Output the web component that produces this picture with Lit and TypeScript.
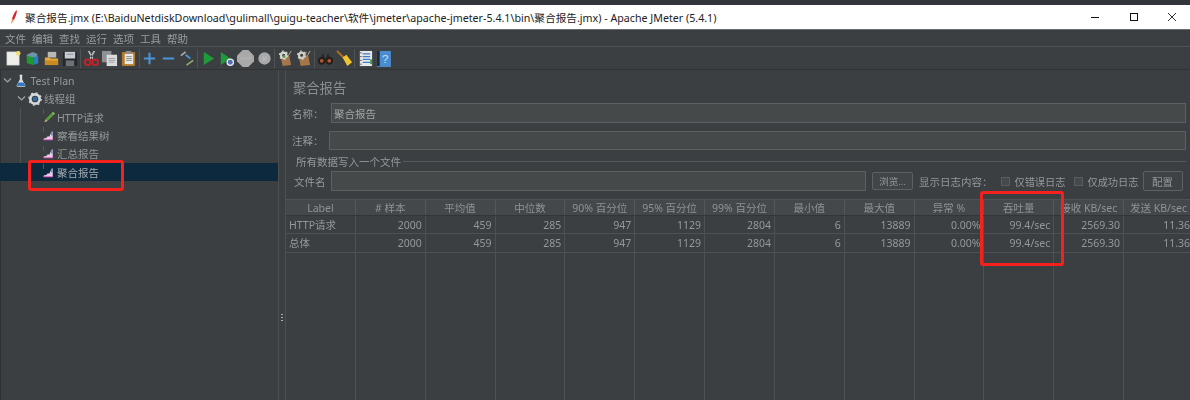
import { LitElement, html, css, svg } from "lit";
import { customElement } from "lit/decorators.js";

const icon = (body: unknown, size = 18) =>
  html`<svg width=${size} height=${size} viewBox="0 0 18 18">${body}</svg>`;

const tools: unknown[] = [
  svg`<rect x="2" y="2" width="13" height="14" fill="#eeeeea" stroke="#c9c9c2" stroke-width=".6"/><circle cx="14" cy="3.5" r="2.4" fill="#f0dc70"/>`,
  svg`<path d="M3 5l6-3 5 2v4H3z" fill="#6d93a8"/><path d="M3 6l7 2v8l-7-2z" fill="#1f9a2c"/><path d="M10 8l5-2v8l-5 2z" fill="#2a7fc0"/>`,
  svg`<rect x="5" y="2" width="9" height="6" fill="#b8b8b4"/><path d="M2 8h5l1 1h8v7H2z" fill="#e8a93a"/><path d="M2 11h14v5H2z" fill="#c98a22"/>`,
  svg`<rect x="2" y="2" width="15" height="15" rx="1" fill="#23262a"/><rect x="4" y="2" width="11" height="7" fill="#c7ccd2"/><rect x="5" y="11" width="9" height="6" fill="#6d7278"/><rect x="6" y="4" width="7" height="1" fill="#8a9199"/>`,
  svg`<path d="M5 1l5 9 1-1.500L7 1zM13 1L8 10l-1-1.500L11 1z" fill="#b9bcc0"/><circle cx="5" cy="13" r="3" fill="none" stroke="#c5222a" stroke-width="2"/><circle cx="13" cy="13" r="3" fill="none" stroke="#c5222a" stroke-width="2"/>`,
  svg`<rect x="1" y="1" width="10" height="12" fill="#8e9091"/><rect x="6" y="5" width="11" height="12" fill="#d9dadb"/><path d="M8 9h7M8 11h7M8 13h6" stroke="#9ea0a2"/>`,
  svg`<rect x="2" y="2" width="14" height="15" rx="1" fill="#b27a2a"/><rect x="5" y="4" width="9" height="11" fill="#e8e8e4"/><rect x="6" y="1" width="6" height="3" fill="#8f8f8c"/><path d="M6.500 7h6M6.500 9h6M6.500 11h6" stroke="#8d8d88"/>`,
  svg`<path d="M9 3v12M3 9h12" stroke="#4b93d6" stroke-width="2.200"/>`,
  svg`<path d="M3 9h12" stroke="#4b93d6" stroke-width="2.200"/>`,
  svg`<path d="M2 6l5-4" stroke="#a8b0a0" stroke-width="1.800"/><path d="M7 5l5 4" stroke="#4b93d6" stroke-width="1.800"/><path d="M8 16l7-5" stroke="#8eaa70" stroke-width="1.800"/>`,
  svg`<path d="M4 2l11 7-11 7z" fill="#1f9a3a"/>`,
  svg`<path d="M3 2l10 7-10 7z" fill="#1f9a3a"/><circle cx="13" cy="13" r="4" fill="#e8edf3"/><circle cx="13" cy="13" r="2.600" fill="#3a78c8"/><path d="M11 11l4 4" stroke="#d8433a"/>`,
  svg`<path d="M6 0h6l6 6v6l-6 6H6l-6-6V6z" fill="#a9a9a9"/><text x="9" y="10.500" text-anchor="middle" font-size="4.500" font-family="Liberation Sans" fill="#bdbdbd">STOP</text>`,
  svg`<circle cx="9" cy="9" r="6.500" fill="#a9a9a9"/><path d="M7 7l4 4M11 7l-4 4" stroke="#bcbcbc" stroke-width="1.200"/>`,
  svg`<path d="M4 8l9-2 2 10-9 1z" fill="#a5764a"/><circle cx="7" cy="5.500" r="2.800" fill="none" stroke="#d8d8d2" stroke-width="2.400"/><circle cx="7" cy="5.500" r="4.400" fill="none" stroke="#d8d8d2" stroke-width="1.200" stroke-dasharray="2 2.600"/><circle cx="7.500" cy="7" r="1.600" fill="#63a040"/><path d="M12 6l3-5" stroke="#c9b890"/>`,
  svg`<path d="M3 8l10-2 2 10-10 1z" fill="#a5764a"/><circle cx="6" cy="5.500" r="2.800" fill="none" stroke="#cfcfc8" stroke-width="2.400"/><circle cx="6" cy="5.500" r="4.400" fill="none" stroke="#cfcfc8" stroke-width="1.200" stroke-dasharray="2 2.600"/><path d="M12 6l3-5M9 6l2-4" stroke="#c9b890"/>`,
  svg`<circle cx="5" cy="11.500" r="4" fill="#231c1a"/><circle cx="13" cy="11.500" r="4" fill="#231c1a"/><circle cx="5" cy="11.500" r="2" fill="#b15a2e"/><circle cx="13" cy="11.500" r="2" fill="#b15a2e"/><path d="M4 8l2-4h1l1 5h2l1-5h1l2 4z" fill="#2d2523"/>`,
  svg`<path d="M1 1l8 8" stroke="#b46f1e" stroke-width="2"/><path d="M7 8l4-3 6 8-5 4z" fill="#eec42f"/>`,
  svg`<rect x="3" y="1" width="13" height="16" fill="#e6e8ea"/><path d="M6 4h8M6 7h8M6 10h8M6 13h8" stroke="#3f7ec0" stroke-width="1.300"/><path d="M2 3h3M2 7h3M2 11h3M2 15h3" stroke="#55585a"/><rect x="14" y="10" width="2" height="5" fill="#2f9a3c"/>`,
  svg`<rect x="2" y="1" width="4" height="16" fill="#1e2a38"/><rect x="5" y="1" width="11" height="16" fill="#4b8ccf"/><text x="7.500" y="14" font-size="12" font-family="Liberation Sans" fill="#cfe0f2">?</text>`,
];
const groups = [[0, 4], [4, 7], [7, 10], [10, 14], [14, 16], [16, 18], [18, 20]];

const chev = html`<svg class="chev" width="9" height="7" viewBox="0 0 9 7"><path d="M1 1.500l3.500 3.500L8 1.500" fill="none" stroke="#a0a4a6" stroke-width="1.200"/></svg>`;
const flask = icon(svg`<path d="M7 1h4v1h-.5v5l4 7.500c.4 1-.2 1.800-1 1.800H4.500c-.8 0-1.400-.8-1-1.800l4-7.500V2H7z" fill="#d9dde0"/><path d="M5.500 11h7l2 4.500H3.500z" fill="#2e79c4"/>`, 14);
const gear = icon(svg`<circle cx="9" cy="9" r="6" fill="none" stroke="#d6dadc" stroke-width="3.400"/><circle cx="9" cy="9" r="8" fill="none" stroke="#d6dadc" stroke-width="1.600" stroke-dasharray="2.500 3.780"/><circle cx="9" cy="9" r="3" fill="#2d6ea8"/>`, 14);
const pencil = icon(svg`<path d="M2 17l2-5 3 3z" fill="#c9b184"/><path d="M4 12L13 3l3 3-9 9z" fill="#5d9a3a"/><path d="M13 3l2-2 3 3-2 2z" fill="#8fbf5c"/>`, 12);
const chart = icon(svg`<path d="M1 16h15V3l-1 0-2 7-5 1-3 2-4 1z" fill="#f3c7ee"/><path d="M1 14l5-3 5-1 3-7h2v2l-2 5H8z" fill="#e6e9ee"/><path d="M13 3h3v6h-3z" fill="#6f8fd0"/><path d="M1 16h15" stroke="#e25fc8" stroke-width="1.400"/>`, 11);

const head = ["Label", "# 样本", "平均值", "中位数", "90% 百分位", "95% 百分位", "99% 百分位", "最小值", "最大值", "异常 %", "吞吐量", "接收 KB/sec", "发送 KB/sec"];
const nums = ["2000", "459", "285", "947", "1129", "2804", "6", "13889", "0.00%", "99.4/sec", "2569.30", "11.36"];

@customElement("app-root")
export class AppRoot extends LitElement {
  static styles = css`
    :host { display: block; position: relative; width: 1190px; height: 400px; overflow: hidden; background: #3c3f41; color: #95989a; font: 10.500px "Noto Sans", "Noto Sans CJK SC", sans-serif; }
    * { box-sizing: border-box; }
    .app { height: 400px; display: flex; flex-direction: column; filter: blur(.3px); }
    .strip { height: 5px; background: #32353a; flex: none; }
    .title { height: 24px; flex: none; background: #fff; color: #222; display: flex; align-items: center; padding-left: 10px; font-size: 10.680px; }
    .title .t { margin-left: 7px; flex: 1; white-space: nowrap; }
    .win { width: 39px; display: flex; justify-content: center; }
    .win.last { width: 37px; }
    .menu { height: 18px; flex: none; border-top: 1px solid #6a6c6e; border-bottom: 1px solid #505354; display: flex; gap: 6px; padding-left: 5px; align-items: center; color: #9a9da0; }
    .bar { height: 23px; flex: none; display: flex; align-items: center; padding-left: 4.500px; border-bottom: 1px solid #303234; }
    .tool { width: 18.700px; display: flex; justify-content: center; }
    .sep { width: 1px; height: 19px; margin: 0 .750px; background: #505354; }
    .main { flex: 1; display: flex; min-height: 0; }
    .tree { width: 279px; flex: none; border-right: 1px solid #4c4f51; padding-top: 1.500px; position: relative; box-shadow: inset 1px 0 #2f3133; }
    .row { height: 18.300px; display: flex; align-items: center; white-space: nowrap; position: relative; }
    .row.l0 { padding-left: 3px; }
    .row.l1 { padding-left: 16.500px; }
    .row.l2 { padding-left: 43px; }
    .row.l2::before { content: ""; position: absolute; left: 43px; top: 1px; height: 5px; width: 1px; background: #55585a; }
    .chev { margin-right: 2px; flex: none; }
    .row .lab { margin-left: 2.500px; }
    .row.l2 .lab { position: absolute; left: 57px; margin-left: 0; }
    .row.sel { background: #0d293e; color: #a6acb0; }
    .guide { position: absolute; left: 20px; top: 38px; height: 73px; width: 1px; background: #505354; }
    .divider { width: 7px; flex: none; border-right: 1px solid #4c4f51; display: flex; align-items: center; justify-content: center; padding-top: 166px; }
    .grip { width: 2px; height: 8px; background: repeating-linear-gradient(#b0b0b0 0 1px, transparent 1px 3px); }
    .pane { flex: 1; min-width: 0; display: flex; flex-direction: column; padding-top: 9px; }
    h1 { margin: 0 0 0 7px; font-size: 13.300px; font-weight: 400; line-height: 18px; color: #8b8e90; }
    .f { display: flex; align-items: center; margin-top: 6px; height: 20px; padding-left: 6px; }
    .lbl { flex: none; }
    .inp { background: #45494a; border: 1px solid #5e6060; height: 100%; color: #a3a6a8; padding-left: 2px; display: flex; align-items: center; }
    .grow { flex: 1; margin-right: 4px; }
    .name .lbl { width: 39px; }
    .note { margin-top: 8px; height: 19px; }
    .note .lbl { width: 37px; }
    .legend { display: flex; align-items: center; margin: 3px 4px 0 10px; height: 16px; }
    .legend::after { content: ""; flex: 1; height: 1px; background: #56595b; margin-left: 2px; }
    .fileRow { display: flex; align-items: center; height: 20px; margin-top: 2px; padding-left: 8px; white-space: nowrap; }
    .fileRow .lbl { width: 37px; }
    .fileRow .inp { width: 535px; flex: none; }
    .btn { flex: none; border: 1px solid #5e6062; border-radius: 2px; height: 18px; display: flex; align-items: center; justify-content: center; background: #424547; }
    .browse { width: 41px; margin: 0 6px; font-size: 9.500px; }
    .cfg { width: 40px; height: 20px; margin-left: 4px; background: #3f4244; }
    .cb { width: 9px; height: 9px; border: 1px solid #5a5c5e; background: #45494a; margin: 0 5px 0 0; flex: none; }
    .opt { width: 51px; font-size: 10.200px; }
    .c1 { margin-left: 8px; }
    .c2 { margin-left: 8px; }
    .table { flex: 1; display: flex; flex-direction: column; margin-top: 8px; min-height: 0; width: 908.050px; }
    .tr { display: grid; grid-template-columns: repeat(13, 69.850px); height: 18px; border-bottom: 1px solid #4e5153; flex: none; }
    .tr.h { height: 17px; background: #45484a; border-top: 1px solid #505354; border-bottom: 1px solid #333537; }
    .tr.r2 { height: 19px; }
    .tr.fill { flex: 1; border-bottom: none; }
    .td { border-right: 1px solid #4e5153; text-align: right; padding-right: 3px; line-height: 19px; white-space: nowrap; overflow: hidden; }
    .td.left { text-align: left; padding-left: 3px; }
    .h .td { text-align: center; padding: 0; line-height: 17px; color: #8f9395; border-right-color: #55585a; }
    .mark { position: absolute; border: 3px solid #f4211d; border-radius: 3px; }
    .m1 { left: 28px; top: 160px; width: 96px; height: 31px; }
    .m2 { left: 980px; top: 191px; width: 84px; height: 75px; }
  `;

  render() {
    return html`
      <div class="app">
        <div class="strip"></div>
        <div class="title">
          <svg width="8" height="14" viewBox="0 0 8 14"><path d="M7 0C4 2 3 6 2 9l2 1c1-3 3-6 3-10z" fill="#d8232a"/><path d="M2 9l-1 5 3-4z" fill="#f08a3c"/></svg>
          <span class="t">聚合报告.jmx (E:\\BaiduNetdiskDownload\\gulimall\\guigu-teacher\\软件\\jmeter\\apache-jmeter-5.4.1\\bin\\聚合报告.jmx) - Apache JMeter (5.4.1)</span>
          <span class="win"><svg width="10" height="10"><path d="M1 5.500h8" stroke="#111"/></svg></span>
          <span class="win"><svg width="10" height="10"><rect x="1.500" y="1.500" width="7" height="7" fill="none" stroke="#111"/></svg></span>
          <span class="win last"><svg width="10" height="10"><path d="M1 1l8 8M9 1l-8 8" stroke="#333"/></svg></span>
        </div>
        <div class="menu">${["文件", "编辑", "查找", "运行", "选项", "工具", "帮助"].map((m) => html`<span>${m}</span>`)}</div>
        <div class="bar">
          ${groups.map(([a, b], i) => html`${i ? html`<span class="sep"></span>` : ""}${tools.slice(a, b).map((t) => html`<span class="tool">${icon(t, 17)}</span>`)}`)}
        </div>
        <div class="main">
          <div class="tree">
            <div class="guide"></div>
            <div class="row l0">${chev}${flask}<span class="lab">Test Plan</span></div>
            <div class="row l1">${chev}${gear}<span class="lab">线程组</span></div>
            <div class="row l2">${pencil}<span class="lab">HTTP请求</span></div>
            <div class="row l2">${chart}<span class="lab">察看结果树</span></div>
            <div class="row l2">${chart}<span class="lab">汇总报告</span></div>
            <div class="row l2 sel">${chart}<span class="lab">聚合报告</span></div>
          </div>
          <div class="divider"><span class="grip"></span></div>
          <div class="pane">
            <h1>聚合报告</h1>
            <div class="f name"><span class="lbl">名称：</span><div class="inp grow">聚合报告</div></div>
            <div class="f note"><span class="lbl">注释：</span><div class="inp grow"></div></div>
            <div class="legend">所有数据写入一个文件</div>
            <div class="fileRow">
              <span class="lbl">文件名</span><div class="inp"></div>
              <div class="btn browse">浏览...</div>
              <span>显示日志内容：</span>
              <span class="cb c1"></span><span class="opt">仅错误日志</span>
              <span class="cb c2"></span><span class="opt">仅成功日志</span>
              <div class="btn cfg">配置</div>
            </div>
            <div class="table">
              <div class="tr h">${head.map((h) => html`<div class="td">${h}</div>`)}</div>
              ${["HTTP请求", "总体"].map((l, i) => html`<div class="tr ${i ? "r2" : ""}"><div class="td left">${l}</div>${nums.map((n) => html`<div class="td">${n}</div>`)}</div>`)}
              <div class="tr fill">${head.map(() => html`<div class="td"></div>`)}</div>
            </div>
          </div>
        </div>
      </div>
      <div class="mark m1"></div>
      <div class="mark m2"></div>
    `;
  }
}
